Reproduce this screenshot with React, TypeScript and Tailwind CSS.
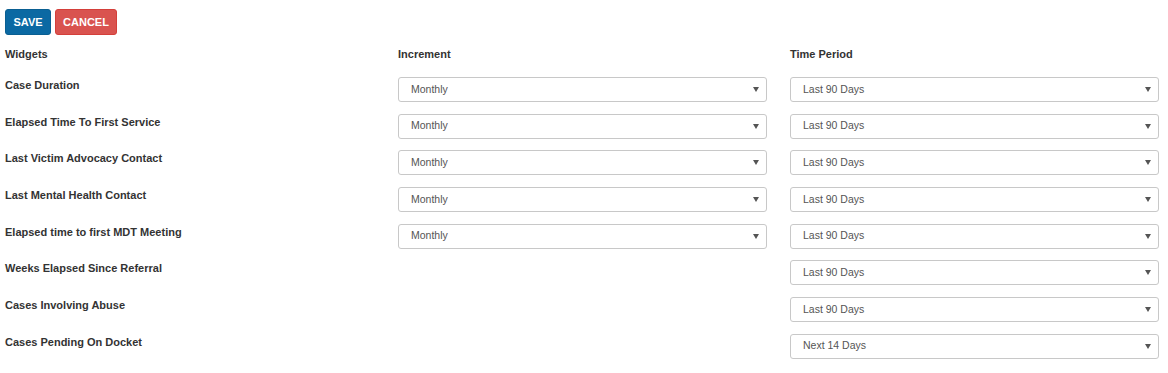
const widgets: { name: string; increment?: string; period: string }[] = [
  { name: "Case Duration", increment: "Monthly", period: "Last 90 Days" },
  { name: "Elapsed Time To First Service", increment: "Monthly", period: "Last 90 Days" },
  { name: "Last Victim Advocacy Contact", increment: "Monthly", period: "Last 90 Days" },
  { name: "Last Mental Health Contact", increment: "Monthly", period: "Last 90 Days" },
  { name: "Elapsed time to first MDT Meeting", increment: "Monthly", period: "Last 90 Days" },
  { name: "Weeks Elapsed Since Referral", period: "Last 90 Days" },
  { name: "Cases Involving Abuse", period: "Last 90 Days" },
  { name: "Cases Pending On Docket", period: "Next 14 Days" },
]

function Dropdown({ value }: { value: string }) {
  return (
    <div className="flex h-[25px] w-[369px] items-center justify-between rounded-[3px] border border-[#c8c8c8] bg-white pl-[12px] pr-[7px] text-[10.5px] text-[#555]">
      <span>{value}</span>
      <svg width="6" height="5" viewBox="0 0 6 5" className="fill-[#555]">
        <path d="M0 0h6L3 5z" />
      </svg>
    </div>
  )
}

export default function App() {
  return (
    <div className="min-h-[373px] bg-white px-[5px] pt-[9px] text-[11px] text-[#333]" style={{ fontFamily: '"Liberation Sans", Arial, sans-serif' }}>
      {/* Actions */}
      <div className="flex gap-[4px]">
        <button className="h-[26px] w-[46px] rounded-[3px] border border-[#0a5f92] bg-[#0b69a3] text-[11px] font-semibold text-white">
          SAVE
        </button>
        <button className="h-[26px] w-[62px] rounded-[3px] border border-[#d43f3a] bg-[#d9534f] text-[11px] font-semibold text-white">
          CANCEL
        </button>
      </div>

      {/* Header */}
      <div className="mt-[11px] grid grid-cols-[393px_392px_1fr] font-bold leading-[16px]">
        <div>Widgets</div>
        <div>Increment</div>
        <div>Time Period</div>
      </div>

      <div className="mt-[15px]">
        {widgets.map((w) => (
          <div key={w.name} className="grid h-[36.7px] grid-cols-[393px_392px_1fr] items-start">
            <div className="font-bold leading-[16px]">{w.name}</div>
            <div>{w.increment && <Dropdown value={w.increment} />}</div>
            <div>
              <Dropdown value={w.period} />
            </div>
          </div>
        ))}
      </div>
    </div>
  )
}
